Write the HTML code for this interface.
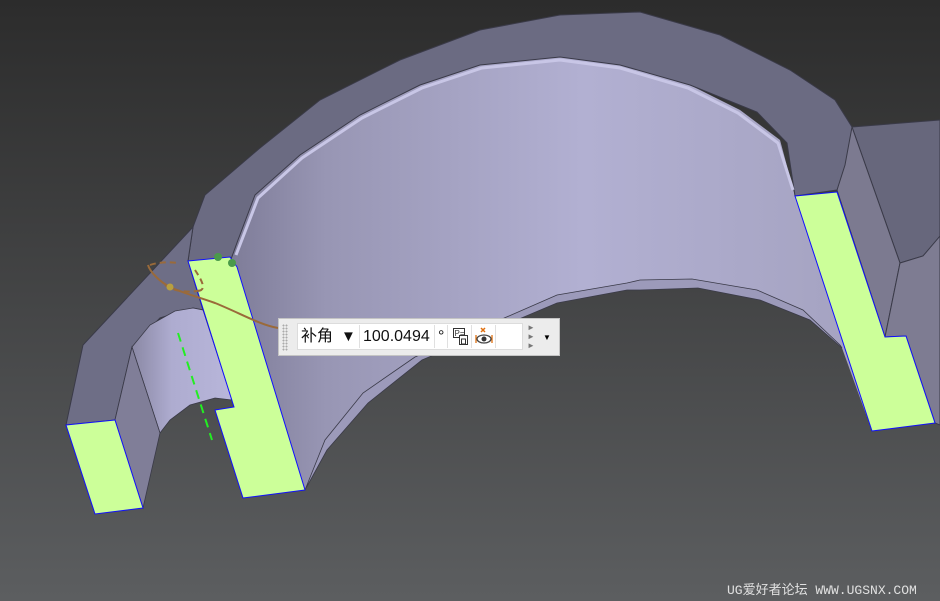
<!DOCTYPE html>
<html><head><meta charset="utf-8"><style>
html,body{margin:0;padding:0;width:940px;height:601px;overflow:hidden;background:#444}
svg{position:absolute;left:0;top:0}
.tb{position:absolute;left:278px;top:318px;width:282px;height:38px;background:#ececec;border:1px solid #c4c4c4;box-sizing:border-box;font-family:"Liberation Sans","Noto Sans CJK SC",sans-serif}
.grip{position:absolute;left:3px;top:5px;width:6px;height:27px;background-image:radial-gradient(#aaa 0.9px,transparent 1.1px);background-size:3px 3px}
.in{position:absolute;left:18px;top:4px;width:226px;height:27px;background:#fff;border:1px solid #dcdcdc;box-sizing:border-box}
.t{position:absolute;top:3px;font-size:16px;color:#111;white-space:nowrap;line-height:20px}
.sep{position:absolute;top:1px;width:1px;height:23px;background:#e0e0e0}
.wm{position:absolute;left:727px;top:579px;font-family:"Liberation Mono","Noto Sans CJK SC",monospace;font-size:13px;color:#e0e0e0;white-space:nowrap}
</style></head><body>
<svg width="940" height="601" viewBox="0 0 940 601">
<defs>
<linearGradient id="bg" x1="0" y1="0" x2="0" y2="1"><stop offset="0" stop-color="#2c2c2c"/><stop offset="1" stop-color="#5c5e60"/></linearGradient>
<linearGradient id="wall" x1="0" y1="0" x2="1" y2="0"><stop offset="0" stop-color="#7e7c98"/><stop offset="0.15" stop-color="#9896b4"/><stop offset="0.55" stop-color="#b2b0d2"/><stop offset="1" stop-color="#a4a2c0"/></linearGradient>
<linearGradient id="cyl" x1="0" y1="0" x2="1" y2="0"><stop offset="0" stop-color="#8a88a4"/><stop offset="0.4" stop-color="#aeacd0"/><stop offset="1" stop-color="#b8b6da"/></linearGradient>
</defs>
<rect width="940" height="601" fill="url(#bg)"/>
<!-- right block -->
<polygon points="852,127 940,120 940,238 923,256 900,263" fill="#67677c" stroke="#3a3a48" stroke-width="1"/>
<polygon points="837,190 852,127 900,263 885,337" fill="#7c7a90" stroke="#3a3a48" stroke-width="1"/>
<polygon points="900,263 923,256 940,236 940,425 935,423 906,336 885,337" fill="#7e7c92" stroke="#3a3a48" stroke-width="1"/>
<!-- inner wall -->
<polygon points="230,262 255,195 300,155 360,115 420,85 480,65 560,57 620,65 690,85 740,110 780,140 795,196 872,431 842,348 810,320 760,300 698,288 640,290 627,290 557,303 422,360 368,403 327,450 305,490 237,267" fill="url(#wall)"/>
<polygon points="305,490 325,440 363,393 415,357 557,295 627,283 640,280 692,279 757,290 803,310 840,345 842,348 810,320 760,300 698,288 640,290 627,290 557,303 422,360 368,403 327,450" fill="#9c9aba" stroke="#3a3a48" stroke-width="0.8"/>
<!-- top face -->
<polygon points="193,227 205,195 260,148 320,100 400,60 480,30 560,15 640,12 720,35 790,70 835,100 852,127 845,165 837,190 795,196 787,143 757,112 690,85 620,65 560,57 480,65 420,85 360,115 300,155 255,195 238,240 230,262 188,261" fill="#6b6b82" stroke="#3a3a48" stroke-width="1"/>
<polyline points="236,255 258,198 302,158 362,118 422,88 482,68 560,60 620,68 688,88 738,113 778,143 793,190" fill="none" stroke="#c8c6e6" stroke-width="3"/>
<!-- left block -->
<polygon points="66,425 83,345 193,227 188,261 203,310 193,308 160,318 132,347 115,420" fill="#6e6e86" stroke="#3a3a48" stroke-width="1"/>
<polygon points="132,347 150,325 175,311 193,308 203,310 232,400 215,398 190,405 170,420 160,433" fill="url(#cyl)" stroke="#3a3a48" stroke-width="0.8"/>
<polygon points="115,420 132,347 160,433 143,508" fill="#807e98" stroke="#3a3a48" stroke-width="0.8"/>
<polygon points="66,425 115,420 143,508 95,514" fill="#ccff99" stroke="#1010ff" stroke-width="1"/>
<polygon points="188,261 230,257 237,267 305,490 243,498 215,410 234,407" fill="#ccff99" stroke="#1010ff" stroke-width="1"/>
<polygon points="795,196 837,192 885,337 906,336 935,423 872,431" fill="#ccff99" stroke="#1010ff" stroke-width="1"/>
<!-- annotations -->
<path d="M278,328 C260,325 240,313 215,303 C195,296 180,292 170,287 C160,282 150,272 148,265" fill="none" stroke="#9a6a3a" stroke-width="2"/>
<path d="M150,265 C158,262 170,262 178,263 M195,270 C205,285 205,290 198,291 M165,285 C175,292 190,293 202,290" fill="none" stroke="#9a6a3a" stroke-width="2" stroke-dasharray="6,4"/>
<line x1="178" y1="333" x2="212" y2="440" stroke="#22ee22" stroke-width="2" stroke-dasharray="9,6"/>
<circle cx="218" cy="257" r="4" fill="#4a9a4a"/><circle cx="232" cy="263" r="4" fill="#4a9a4a"/><circle cx="170" cy="287" r="3.5" fill="#b8a040"/>
</svg>
<div class="tb"><div class="grip"></div>
<div class="in">
<span class="t" style="left:3px">补角</span><span class="t" style="left:43px;font-size:15px">▼</span>
<div class="sep" style="left:61px"></div>
<span class="t" style="left:65px">100.0494</span>
<div class="sep" style="left:136px"></div>
<span class="t" style="left:140px">°</span>
<div class="sep" style="left:149px"></div>
<svg style="position:absolute;left:155px;top:4px" width="16" height="17" viewBox="0 0 16 17"><rect x="0.5" y="0.5" width="11" height="9" fill="#fff" stroke="#333"/><text x="1.5" y="8" font-size="8" font-family="Liberation Sans" fill="#333">P=</text><rect x="6.5" y="7.5" width="8" height="9" fill="#fff" stroke="#333"/><rect x="8.5" y="11" width="4" height="5" fill="none" stroke="#333"/></svg>
<div class="sep" style="left:173px"></div>
<svg style="position:absolute;left:177px;top:3px" width="18" height="18" viewBox="0 0 18 18"><path d="M6 1 L10 5 M10 1 L6 5" stroke="#e07010" stroke-width="1.5"/><path d="M1 8 V16 M17 8 V16" stroke="#e07010" stroke-width="1.3"/><ellipse cx="9" cy="12" rx="7" ry="4" fill="#fff" stroke="#444" stroke-width="1.3"/><circle cx="9" cy="12" r="2.5" fill="#333"/></svg>
<div class="sep" style="left:197px"></div>
</div>
<span style="position:absolute;left:248px;top:4px;font-size:8px;color:#777;line-height:9px">►<br>►<br>►</span>
<span style="position:absolute;left:264px;top:14px;font-size:8px;color:#000">▼</span>
</div>
<div class="wm">UG爱好者论坛 WWW.UGSNX.COM</div>
</body></html>
